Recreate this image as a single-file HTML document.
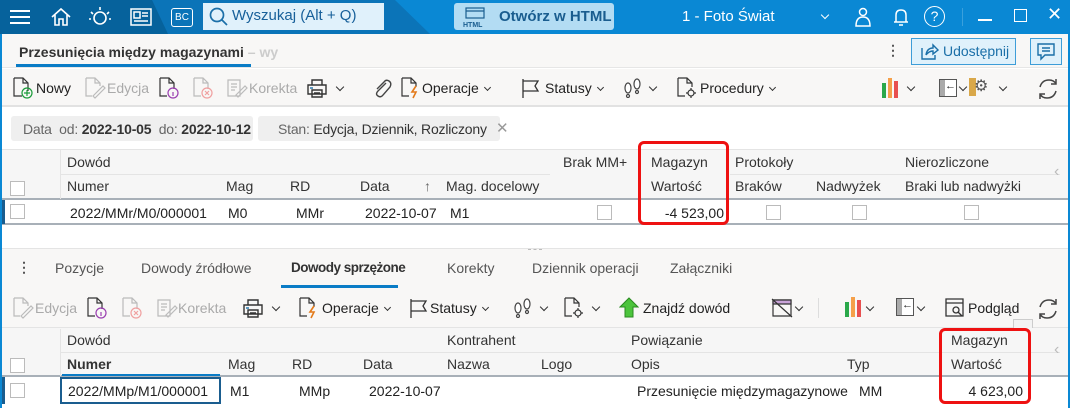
<!DOCTYPE html>
<html><head><meta charset="utf-8"><style>
*{box-sizing:border-box;margin:0;padding:0}
body{width:1070px;height:408px;overflow:hidden;font-family:"Liberation Sans",sans-serif;font-size:14px;color:#222;background:#fff;position:relative}
.a{position:absolute;white-space:nowrap}
.g{color:#aaa}
.cb{position:absolute;width:15px;height:15px;border:1px solid #bbb;background:#fff}
.hd{color:#333}
.ic{position:absolute}
.cv{position:absolute;width:6px;height:6px;border-right:1.3px solid #333;border-bottom:1.3px solid #333;transform:rotate(45deg)}
.cw{display:inline-block;width:5px;height:5px;border-right:1.2px solid #333;border-bottom:1.2px solid #333;transform:rotate(45deg);margin-left:6px;position:relative;top:-3px}
</style></head><body>
<!-- title bar -->
<div class="a" style="left:0;top:0;width:1070px;height:34px;background:#0a88d4"></div>
<div class="a" style="left:0;top:0;width:430px;height:34px;background:#0b74b8;clip-path:polygon(0 0,395px 0,430px 34px,0 34px)"></div>
<div class="a" style="left:0;top:0;width:168px;height:34px;background:#06629c;clip-path:polygon(0 0,152px 0,168px 34px,0 34px)"></div>
<div class="a" style="left:10px;top:10px;width:20px;height:2px;background:#fff;box-shadow:0 6px 0 #fff,0 12px 0 #fff"></div>
<svg class="ic" style="left:50px;top:7px" width="22" height="20" fill="none" stroke="#fff" stroke-width="1.6"><path d="M2 10 L11 2 L20 10 M5 8 V18 H9 V12 H13 V18 H17 V8"/></svg>
<svg class="ic" style="left:88px;top:6px" width="24" height="22" fill="none" stroke="#fff" stroke-width="1.6"><circle cx="12" cy="12" r="6"/><path d="M12 1v3M3 6l2 2M21 6l-2 2M1 13h2M21 13h2"/></svg>
<svg class="ic" style="left:130px;top:8px" width="22" height="18" fill="none" stroke="#fff" stroke-width="1.5"><rect x="1" y="1" width="20" height="16"/><rect x="4" y="4" width="6" height="6"/><path d="M12 5h6M12 8h6M4 13h14"/></svg>
<div class="a" style="left:171px;top:8px;width:22px;height:19px;border:1.5px solid #fff;border-radius:3px;color:#fff;font-size:10px;text-align:center;line-height:17px">BC</div>
<div class="a" style="left:203px;top:3px;width:181px;height:27px;background:#e0f1fb"></div>
<svg class="ic" style="left:209px;top:7px" width="20" height="20" fill="none" stroke="#1a6fa8" stroke-width="1.7"><circle cx="8" cy="8" r="6.5"/><path d="M13 13l5 5"/></svg>
<div class="a" style="left:232px;top:7px;font-size:15px;color:#17609a">Wyszukaj (Alt + Q)</div>
<div class="a" style="left:454px;top:3px;width:160px;height:27px;background:#b3dcf3;border-radius:3px"></div>
<svg class="ic" style="left:462px;top:6px" width="26" height="22" fill="none" stroke="#1a5d8f" stroke-width="1.2"><rect x="4" y="2" width="18" height="10"/><path d="M4 5h18"/><text x="1" y="21" font-size="7" fill="#1a5d8f" stroke="none" font-weight="bold" font-family="Liberation Sans">HTML</text></svg>
<div class="a" style="left:499px;top:8px;font-size:15px;color:#1a5d8f;font-weight:bold">Otwórz w HTML</div>
<div class="a" style="left:682px;top:8px;font-size:15px;color:#fff">1 - Foto Świat</div>
<div class="cv" style="left:822px;top:12px;border-color:#fff"></div>
<svg class="ic" style="left:854px;top:7px" width="18" height="20" fill="none" stroke="#fff" stroke-width="1.5"><circle cx="9" cy="5" r="3.5"/><path d="M2 19 Q2 10 9 10 Q16 10 16 19 Z"/></svg>
<svg class="ic" style="left:892px;top:7px" width="18" height="20" fill="none" stroke="#fff" stroke-width="1.5"><path d="M4 15 V8 Q4 3 9 3 Q14 3 14 8 V15 H2 H16 M7 18 h4"/></svg>
<div class="a" style="left:924px;top:6px;width:21px;height:21px;border:1.5px solid #fff;border-radius:50%;color:#fff;text-align:center;font-size:14px;line-height:18px">?</div>
<div class="a" style="left:962px;top:8px;width:1px;height:18px;background:#3aa0dc"></div>
<div class="a" style="left:978px;top:19px;width:14px;height:1.5px;background:#fff"></div>
<div class="a" style="left:1014px;top:9px;width:13px;height:13px;border:1.5px solid #fff"></div>
<div class="a" style="left:1047px;top:4px;color:#fff;font-size:18px">✕</div>
<!-- window border -->
<div class="a" style="left:0;top:34px;width:2px;height:374px;background:#0a88d4"></div>
<div class="a" style="left:1068px;top:34px;width:2px;height:374px;background:#0a88d4"></div>
<!-- tab row -->
<div class="a" style="left:2px;top:34px;width:1066px;height:34px;background:#f8f7f6;border-bottom:1px solid #e6e6e6"></div>
<div class="a" style="left:19px;top:44px;font-weight:bold;font-size:14px;color:#333">Przesunięcia między magazynami <span style="color:#ccc">– wy</span></div>
<div class="a" style="left:16px;top:64px;width:235px;height:3px;background:#0a7cc6"></div>
<div class="a" style="left:886px;top:42px;font-weight:bold;color:#555">⋮</div>
<div class="a" style="left:911px;top:38px;width:105px;height:27px;background:#e0f1fb;border:1px solid #3d9dd8"></div>
<svg class="ic" style="left:919px;top:42px" width="20" height="19" fill="none" stroke="#1a6fa8" stroke-width="1.4"><path d="M3 6v11h13v-4M7 13 Q8 6 14 6 V3 L19 8 L14 12 V9 Q10 9 7 13"/></svg>
<div class="a" style="left:943px;top:43px;color:#1a6fa8;font-size:14px">Udostępnij</div>
<div class="a" style="left:1030px;top:38px;width:32px;height:27px;background:#e0f1fb;border:1px solid #3d9dd8"></div>
<svg class="ic" style="left:1036px;top:42px" width="20" height="19" fill="none" stroke="#1a6fa8" stroke-width="1.4"><path d="M2 2h16v11h-9l-4 4v-4H2z M6 6h8M6 9h8"/></svg>
<!-- toolbar 1 -->
<div class="a" style="left:2px;top:69px;width:1066px;height:38px;background:#f8f7f6;border-bottom:2px solid #e2e2e2"></div>
<svg class="ic" style="left:12px;top:77px" width="22" height="22" fill="none" stroke="#333" stroke-width="1.2"><path d="M2 1h9l5 5v8M2 1v18h8M11 1v5h5"/><circle cx="15" cy="16" r="5" stroke="#1a9b3a"/><path d="M15 13v6M12 16h6" stroke="#1a9b3a"/></svg>
<div class="a" style="left:36px;top:80px">Nowy</div>
<svg class="ic" style="left:84px;top:77px" width="22" height="22" fill="none" stroke="#bbb" stroke-width="1.2"><path d="M2 1h9l5 5v3M2 1v18h6M11 1v5h5M9 19l10-10 2 2-10 10z"/></svg>
<div class="a g" style="left:107px;top:80px">Edycja</div>
<svg class="ic" style="left:158px;top:77px" width="22" height="22" fill="none" stroke="#333" stroke-width="1.2"><path d="M2 1h9l5 5v6M2 1v18h7M11 1v5h5"/><circle cx="15" cy="16" r="5" stroke="#9a3fb0"/><path d="M15 15v4" stroke="#9a3fb0"/></svg>
<svg class="ic" style="left:192px;top:77px" width="22" height="22" fill="none" stroke="#bbb" stroke-width="1.2"><path d="M2 1h9l5 5v6M2 1v18h7M11 1v5h5"/><circle cx="15" cy="16" r="5" stroke="#f0a0a0"/><path d="M13 14l4 4M17 14l-4 4" stroke="#f0a0a0"/></svg>
<svg class="ic" style="left:226px;top:77px" width="22" height="22" fill="none" stroke="#bbb" stroke-width="1.2"><path d="M2 3h12v16H2z M5 7h6M5 10h6M5 13h4M10 18l9-9 2 2-9 9z"/></svg>
<div class="a g" style="left:249px;top:80px">Korekta</div>
<svg class="ic" style="left:306px;top:77px" width="22" height="22" fill="none" stroke="#333" stroke-width="1.4"><path d="M6 3h10v5H6zM2 8h18v9H2zM6 13h10v7H6z M8 16h6"/><path d="M4 11h3" stroke="#1a6fa8"/></svg>
<div class="cv" style="left:337px;top:84px"></div>
<svg class="ic" style="left:372px;top:77px" width="20" height="22" fill="none" stroke="#444" stroke-width="1.4"><path d="M14 6 L6 14 Q3 17 6 19 Q9 21 11 18 L18 10 Q20 6 17 4 Q14 2 12 5 L5 12"/></svg>
<svg class="ic" style="left:400px;top:77px" width="22" height="22" fill="none" stroke="#333" stroke-width="1.2"><path d="M2 1h9l5 5v4M2 1v18h7M11 1v5h5"/><path d="M16 9l-4 6h4l-3 6" stroke="#e37a1a" stroke-width="1.6"/></svg>
<div class="a" style="left:422px;top:80px">Operacje<span class="cw"></span></div>
<svg class="ic" style="left:520px;top:78px" width="22" height="20" fill="none" stroke="#333" stroke-width="1.3"><path d="M3 1v19M3 3h15l-3 5 3 5H3"/></svg>
<div class="a" style="left:545px;top:80px">Statusy<span class="cw"></span></div>
<svg class="ic" style="left:622px;top:78px" width="22" height="20" fill="#fff" stroke="#444" stroke-width="1.2"><ellipse cx="6" cy="10" rx="3" ry="5"/><ellipse cx="15" cy="6" rx="3" ry="5"/><circle cx="6" cy="18" r="1.5"/><circle cx="15" cy="14" r="1.5"/></svg>
<div class="cv" style="left:650px;top:84px"></div>
<svg class="ic" style="left:676px;top:77px" width="22" height="22" fill="none" stroke="#333" stroke-width="1.2"><path d="M2 1h9l5 5v4M2 1v18h7M11 1v5h5"/><circle cx="15" cy="16" r="3"/><path d="M15 11v2M15 19v2M10 16h2M18 16h2"/></svg>
<div class="a" style="left:700px;top:80px">Procedury<span class="cw"></span></div>
<div class="a" style="left:882px;top:83px;width:4px;height:15px;background:#2aa84a"></div>
<div class="a" style="left:888px;top:78px;width:4px;height:20px;background:#f5a04a"></div>
<div class="a" style="left:894px;top:81px;width:4px;height:17px;background:#e85050"></div>
<div class="cv" style="left:908px;top:84px"></div>
<div class="a" style="left:939px;top:79px;width:18px;height:18px;border:1.3px solid #555;background:linear-gradient(90deg,#aaa 5px,#fff 5px)"></div>
<div class="a" style="left:945px;top:80px;font-size:11px">←</div>
<div class="cv" style="left:960px;top:84px"></div>
<div class="a" style="left:969px;top:78px;width:7px;height:18px;background:#d9a84a"></div>
<div class="a" style="left:974px;top:76px;font-size:16px;color:#555">⚙</div>
<div class="cv" style="left:1000px;top:84px"></div>
<svg class="ic" style="left:1036px;top:77px" width="24" height="24" fill="none" stroke="#444" stroke-width="1.5"><path d="M4 10 Q6 3 13 3 Q18 3 20 7 M20 2v5h-5 M20 14 Q18 21 11 21 Q6 21 4 17 M4 22v-5h5"/></svg>
<!-- filter row -->
<div class="a" style="left:11px;top:116px;width:242px;height:25px;background:#efefef;border-radius:3px"></div>
<div class="a" style="left:23px;top:121px;color:#666;letter-spacing:-0.2px">Data&nbsp; od: <b style="color:#333">2022-10-05</b>&nbsp; do: <b style="color:#333">2022-10-12</b></div>
<div class="a" style="left:258px;top:116px;width:242px;height:25px;background:#efefef;border-radius:3px"></div>
<div class="a" style="left:278px;top:121px;color:#666;letter-spacing:-0.2px">Stan: <span style="color:#333">Edycja, Dziennik, Rozliczony</span></div>
<div class="a" style="left:496px;top:119px;color:#999;font-size:15px">✕</div>
<!-- grid 1 header -->
<div class="a" style="left:2px;top:149px;width:1066px;height:51px;background:#f6f6f6;border-top:1px solid #e4e4e4;border-bottom:2px solid #a8b0b8"></div>
<div class="a" style="left:60px;top:174px;width:490px;height:1px;background:#e4e4e4"></div>
<div class="a" style="left:730px;top:174px;width:330px;height:1px;background:#e4e4e4"></div>
<div class="a" style="left:60px;top:150px;width:1px;height:49px;background:#e4e4e4"></div>
<div class="cb" style="left:10px;top:181px"></div>
<div class="a hd" style="left:67px;top:154px">Dowód</div>
<div class="a hd" style="left:67px;top:178px">Numer</div>
<div class="a hd" style="left:226px;top:178px">Mag</div>
<div class="a hd" style="left:290px;top:178px">RD</div>
<div class="a hd" style="left:360px;top:178px">Data</div>
<div class="a hd" style="left:424px;top:178px;color:#666">↑</div>
<div class="a hd" style="left:446px;top:178px">Mag. docelowy</div>
<div class="a hd" style="left:563px;top:154px">Brak MM+</div>
<div class="a hd" style="left:651px;top:154px">Magazyn</div>
<div class="a hd" style="left:651px;top:178px">Wartość</div>
<div class="a hd" style="left:735px;top:154px">Protokoły</div>
<div class="a hd" style="left:735px;top:178px">Braków</div>
<div class="a hd" style="left:816px;top:178px">Nadwyżek</div>
<div class="a hd" style="left:905px;top:154px">Nierozliczone</div>
<div class="a hd" style="left:905px;top:178px">Braki lub nadwyżki</div>
<div class="a" style="left:1054px;top:163px;color:#bbb;font-size:16px">‹</div>
<!-- grid 1 row -->
<div class="a" style="left:2px;top:200px;width:1066px;height:25px;border-bottom:2px solid #a8b0b8;background:#fff"></div>
<div class="a" style="left:2px;top:200px;width:3px;height:24px;background:#1a5d8f"></div>
<div class="cb" style="left:10px;top:204px"></div>
<div class="a" style="left:70px;top:205px">2022/MMr/M0/000001</div>
<div class="a" style="left:228px;top:205px">M0</div>
<div class="a" style="left:296px;top:205px">MMr</div>
<div class="a" style="left:365px;top:205px">2022-10-07</div>
<div class="a" style="left:450px;top:205px">M1</div>
<div class="cb" style="left:597px;top:205px"></div>
<div class="a" style="left:640px;top:205px;width:84px;text-align:right">-4 523,00</div>
<div class="cb" style="left:766px;top:205px"></div>
<div class="cb" style="left:852px;top:205px"></div>
<div class="cb" style="left:964px;top:205px"></div>
<div class="a" style="left:638px;top:141px;width:91px;height:84px;border:3px solid #ee1111;border-radius:6px"></div>
<!-- bottom tabs -->
<div class="a" style="left:2px;top:248px;width:1066px;height:40px;background:#f8f7f6;border-top:1px solid #e4e4e4"></div>
<div class="a" style="left:528px;top:249px;width:14px;border-top:1px dashed #bbb"></div>
<div class="a" style="left:17px;top:259px;font-weight:bold;color:#555">⋮</div>
<div class="a" style="left:55px;top:260px;color:#555">Pozycje</div>
<div class="a" style="left:141px;top:260px;color:#555">Dowody źródłowe</div>
<div class="a" style="left:291px;top:260px;font-weight:bold;color:#333;letter-spacing:-0.5px;font-size:13.5px">Dowody sprzężone</div>
<div class="a" style="left:281px;top:285px;width:117px;height:3px;background:#0a7cc6"></div>
<div class="a" style="left:447px;top:260px;color:#555">Korekty</div>
<div class="a" style="left:532px;top:260px;color:#555">Dziennik operacji</div>
<div class="a" style="left:670px;top:260px;color:#555">Załączniki</div>
<!-- toolbar 2 -->
<div class="a" style="left:2px;top:288px;width:1066px;height:40px;background:#f8f7f6;border-bottom:1px solid #e4e4e4"></div>
<svg class="ic" style="left:12px;top:297px" width="22" height="22" fill="none" stroke="#bbb" stroke-width="1.2"><path d="M2 1h9l5 5v3M2 1v18h6M11 1v5h5M9 19l10-10 2 2-10 10z"/></svg>
<div class="a g" style="left:35px;top:300px">Edycja</div>
<svg class="ic" style="left:86px;top:297px" width="22" height="22" fill="none" stroke="#333" stroke-width="1.2"><path d="M2 1h9l5 5v6M2 1v18h7M11 1v5h5"/><circle cx="15" cy="16" r="5" stroke="#9a3fb0"/><path d="M15 15v4" stroke="#9a3fb0"/></svg>
<svg class="ic" style="left:121px;top:297px" width="22" height="22" fill="none" stroke="#bbb" stroke-width="1.2"><path d="M2 1h9l5 5v6M2 1v18h7M11 1v5h5"/><circle cx="15" cy="16" r="5" stroke="#f0a0a0"/><path d="M13 14l4 4M17 14l-4 4" stroke="#f0a0a0"/></svg>
<svg class="ic" style="left:156px;top:297px" width="22" height="22" fill="none" stroke="#bbb" stroke-width="1.2"><path d="M2 3h12v16H2z M5 7h6M5 10h6M5 13h4M10 18l9-9 2 2-9 9z"/></svg>
<div class="a g" style="left:178px;top:300px">Korekta</div>
<svg class="ic" style="left:242px;top:297px" width="22" height="22" fill="none" stroke="#333" stroke-width="1.4"><path d="M6 3h10v5H6zM2 8h18v9H2zM6 13h10v7H6z M8 16h6"/><path d="M4 11h3" stroke="#1a6fa8"/></svg>
<div class="cv" style="left:273px;top:304px"></div>
<svg class="ic" style="left:298px;top:297px" width="22" height="22" fill="none" stroke="#333" stroke-width="1.2"><path d="M2 1h9l5 5v4M2 1v18h7M11 1v5h5"/><path d="M16 9l-4 6h4l-3 6" stroke="#e37a1a" stroke-width="1.6"/></svg>
<div class="a" style="left:322px;top:300px">Operacje<span class="cw"></span></div>
<svg class="ic" style="left:408px;top:298px" width="22" height="20" fill="none" stroke="#333" stroke-width="1.3"><path d="M3 1v19M3 3h15l-3 5 3 5H3"/></svg>
<div class="a" style="left:430px;top:300px">Statusy<span class="cw"></span></div>
<svg class="ic" style="left:512px;top:298px" width="22" height="20" fill="#fff" stroke="#444" stroke-width="1.2"><ellipse cx="6" cy="10" rx="3" ry="5"/><ellipse cx="15" cy="6" rx="3" ry="5"/><circle cx="6" cy="18" r="1.5"/><circle cx="15" cy="14" r="1.5"/></svg>
<div class="cv" style="left:541px;top:304px"></div>
<svg class="ic" style="left:563px;top:297px" width="22" height="22" fill="none" stroke="#333" stroke-width="1.2"><path d="M2 1h9l5 5v4M2 1v18h7M11 1v5h5"/><circle cx="15" cy="16" r="3"/><path d="M15 11v2M15 19v2M10 16h2M18 16h2"/></svg>
<div class="cv" style="left:593px;top:304px"></div>
<svg class="ic" style="left:619px;top:297px" width="20" height="22"><path d="M10 1 L19 10 H14 V20 H6 V10 H1 Z" fill="#4cc43c" stroke="#2a8a20"/></svg>
<div class="a" style="left:643px;top:300px">Znajdź dowód</div>
<svg class="ic" style="left:770px;top:297px" width="24" height="22" fill="none" stroke="#333" stroke-width="1.2"><path d="M3 3h18v16H3z"/><path d="M3 3h18v4H3z" fill="#c9a3d8"/><path d="M2 2l20 18"/></svg>
<div class="cv" style="left:796px;top:304px"></div>
<div class="a" style="left:818px;top:298px;width:1px;height:20px;background:#ddd"></div>
<div class="a" style="left:845px;top:302px;width:4px;height:15px;background:#2aa84a"></div>
<div class="a" style="left:851px;top:297px;width:4px;height:20px;background:#f5a04a"></div>
<div class="a" style="left:857px;top:300px;width:4px;height:17px;background:#e85050"></div>
<div class="cv" style="left:867px;top:304px"></div>
<div class="a" style="left:896px;top:298px;width:18px;height:18px;border:1.3px solid #555;background:linear-gradient(90deg,#aaa 5px,#fff 5px)"></div>
<div class="a" style="left:902px;top:299px;font-size:11px">←</div>
<div class="cv" style="left:918px;top:304px"></div>
<svg class="ic" style="left:944px;top:297px" width="22" height="22" fill="none" stroke="#333" stroke-width="1.3"><path d="M2 2h17v17H2zM2 6h17"/><circle cx="12" cy="13" r="3"/><path d="M14 15l4 4"/></svg>
<div class="a" style="left:968px;top:300px">Podgląd</div>
<svg class="ic" style="left:1036px;top:297px" width="24" height="24" fill="none" stroke="#444" stroke-width="1.5"><path d="M4 10 Q6 3 13 3 Q18 3 20 7 M20 2v5h-5 M20 14 Q18 21 11 21 Q6 21 4 17 M4 22v-5h5"/></svg>
<div class="a" style="left:1013px;top:319px;width:20px;height:10px;border:1px solid #ccc;background:#f3f3f3"></div>
<!-- grid 2 header -->
<div class="a" style="left:2px;top:328px;width:1066px;height:49px;background:#f6f6f6;border-bottom:2px solid #a8b0b8"></div>
<div class="a" style="left:60px;top:352px;width:1000px;height:1px;background:#e4e4e4"></div>
<div class="a" style="left:60px;top:329px;width:1px;height:47px;background:#e4e4e4"></div>
<div class="a" style="left:62px;top:374px;width:158px;height:2px;background:#0a7cc6"></div>
<div class="cb" style="left:10px;top:358px"></div>
<div class="a hd" style="left:67px;top:332px">Dowód</div>
<div class="a hd" style="left:67px;top:356px;font-weight:bold">Numer</div>
<div class="a hd" style="left:228px;top:356px">Mag</div>
<div class="a hd" style="left:292px;top:356px">RD</div>
<div class="a hd" style="left:363px;top:356px">Data</div>
<div class="a hd" style="left:447px;top:332px">Kontrahent</div>
<div class="a hd" style="left:447px;top:356px">Nazwa</div>
<div class="a hd" style="left:541px;top:356px">Logo</div>
<div class="a hd" style="left:631px;top:332px">Powiązanie</div>
<div class="a hd" style="left:631px;top:356px">Opis</div>
<div class="a hd" style="left:847px;top:356px">Typ</div>
<div class="a hd" style="left:951px;top:332px">Magazyn</div>
<div class="a hd" style="left:951px;top:356px">Wartość</div>
<div class="a" style="left:1054px;top:341px;color:#bbb;font-size:16px">‹</div>
<!-- grid 2 row -->
<div class="a" style="left:2px;top:377px;width:3px;height:27px;background:#1a5d8f"></div>
<div class="cb" style="left:10px;top:383px"></div>
<div class="a" style="left:60px;top:377px;width:161px;height:27px;border:2px solid #1a5d8f"></div>
<div class="a" style="left:68px;top:383px">2022/MMp/M1/000001</div>
<div class="a" style="left:230px;top:383px">M1</div>
<div class="a" style="left:299px;top:383px">MMp</div>
<div class="a" style="left:369px;top:383px">2022-10-07</div>
<div class="a" style="left:637px;top:383px">Przesunięcie międzymagazynowe</div>
<div class="a" style="left:859px;top:383px">MM</div>
<div class="a" style="left:956px;top:383px;width:67px;text-align:right">4 623,00</div>
<div class="a" style="left:939px;top:328px;width:92px;height:76px;border:3px solid #ee1111;border-radius:6px"></div>
</body></html>
